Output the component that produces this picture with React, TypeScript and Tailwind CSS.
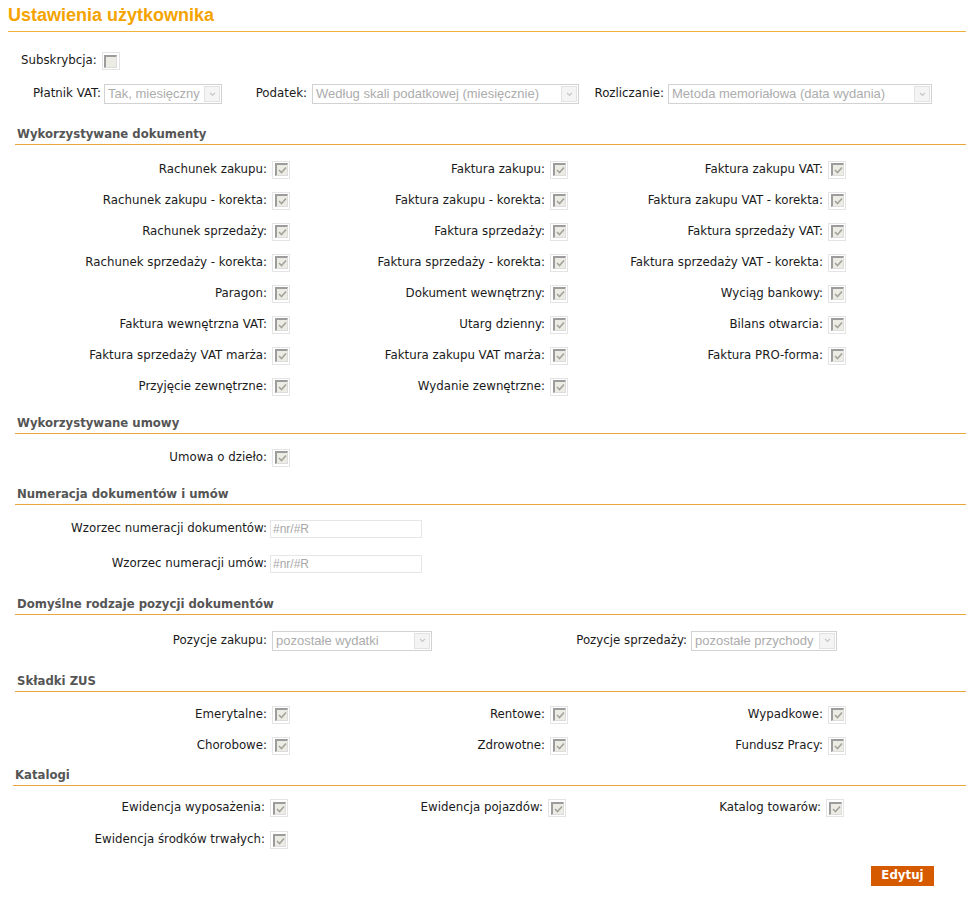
import React from "react";

const font = "font-['Verdana','DejaVu_Sans',sans-serif]";

function Check({ checked = true }: { checked?: boolean }) {
    return (
        <span className="inline-flex w-[18px] h-[18px] items-center justify-center border border-[#e4e4e4] bg-white">
            <span className="relative w-[13px] h-[13px] border-t-[2px] border-l-[2px] border-b border-r border-t-[#9c9c9c] border-l-[#9c9c9c] border-b-[#dcdcdc] border-r-[#dcdcdc] bg-[#ecebe4]">
                {checked && (
                    <svg
                        viewBox="0 0 11 11"
                        className="absolute left-[0px] top-[0px] w-[11px] h-[11px]"
                    >
                        <path
                            d="M2 5 L4.5 7.5 L9 2.5"
                            fill="none"
                            stroke="#a3a39c"
                            strokeWidth="1.6"
                        />
                    </svg>
                )}
            </span>
        </span>
    );
}

function FakeSelect({ value, width }: { value: string; width: string }) {
    return (
        <span
            className={`${width} h-[20px] flex items-center border border-[#d2d2d2] bg-white`}
        >
            <span className="flex-1 pl-[3px] overflow-hidden whitespace-nowrap font-['Liberation_Sans',Arial,sans-serif] text-[13px] leading-[18px] text-[#acacac]">
                {value}
            </span>
            <span className="w-[16px] h-[16px] mr-[1px] flex items-center justify-center border border-[#e2e2e2] bg-[#f4f4f4]">
                <svg viewBox="0 0 8 6" className="w-[7px] h-[5px]">
                    <path
                        d="M1 1 L4 4 L7 1"
                        fill="none"
                        stroke="#c4c4c4"
                        strokeWidth="1.4"
                    />
                </svg>
            </span>
        </span>
    );
}

function SectionHeader({ title, mt, shift = false }: { title: string; mt: string; shift?: boolean }) {
    return (
        <div
            className={`${mt} ${shift ? "ml-[13px] w-[953px]" : "ml-[15px] w-[951px]"} pb-[3px] border-b border-[#e8a63c]`}
        >
            <span className="pl-[2px] block text-[11.7px] leading-[14px] font-bold text-[#555555]">
                {title}
            </span>
        </div>
    );
}

type Item = [string, boolean] | null;

function CheckGrid({ rows, mt, rowH = "h-[31px]", shift = false }: { rows: Item[][]; mt: string; rowH?: string; shift?: boolean }) {
    return (
        <div className={`${mt} ${shift ? "ml-[13px]" : "ml-[15px]"}`}>
            {rows.map((row, i) => (
                <div key={i} className={`grid grid-cols-[252px_26px_252px_26px_252px_26px] items-center ${rowH}`}>
                    {[0, 1, 2].map((c) => {
                        const it = row[c];
                        return (
                            <React.Fragment key={c}>
                                <span className="text-right text-[11.8px] text-[#1a1a1a] whitespace-nowrap">
                                    {it ? it[0] : ""}
                                </span>
                                <span className="pl-[5px] flex items-center">
                                    {it ? <Check checked={it[1]} /> : null}
                                </span>
                            </React.Fragment>
                        );
                    })}
                </div>
            ))}
        </div>
    );
}

const docs: Item[][] = [
    [["Rachunek zakupu:", true], ["Faktura zakupu:", true], ["Faktura zakupu VAT:", true]],
    [["Rachunek zakupu - korekta:", true], ["Faktura zakupu - korekta:", true], ["Faktura zakupu VAT - korekta:", true]],
    [["Rachunek sprzedaży:", true], ["Faktura sprzedaży:", true], ["Faktura sprzedaży VAT:", true]],
    [["Rachunek sprzedaży - korekta:", true], ["Faktura sprzedaży - korekta:", true], ["Faktura sprzedaży VAT - korekta:", true]],
    [["Paragon:", true], ["Dokument wewnętrzny:", true], ["Wyciąg bankowy:", true]],
    [["Faktura wewnętrzna VAT:", true], ["Utarg dzienny:", true], ["Bilans otwarcia:", true]],
    [["Faktura sprzedaży VAT marża:", true], ["Faktura zakupu VAT marża:", true], ["Faktura PRO-forma:", true]],
    [["Przyjęcie zewnętrzne:", true], ["Wydanie zewnętrzne:", true], null],
];

const zus: Item[][] = [
    [["Emerytalne:", true], ["Rentowe:", true], ["Wypadkowe:", true]],
    [["Chorobowe:", true], ["Zdrowotne:", true], ["Fundusz Pracy:", true]],
];

const katalogi: Item[][] = [
    [["Ewidencja wyposażenia:", true], ["Ewidencja pojazdów:", true], ["Katalog towarów:", true]],
    [["Ewidencja środków trwałych:", true], null, null],
];

export default function App() {
    return (
        <div className={`w-[978px] h-[901px] bg-white ${font}`}>
            <div className="ml-[8px] w-[958px] h-[32px] pt-[4px] border-b border-[#f0b23c]">
                <h1 className="font-['Liberation_Sans',Arial,sans-serif] font-bold text-[18px] leading-[22px] text-[#f4a300]">
                    Ustawienia użytkownika
                </h1>
            </div>

            <div className="mt-[20px] h-[18px] flex items-center pl-[21px] gap-[5px]">
                <span className="text-[11.8px] text-[#1a1a1a]">Subskrybcja:</span>
                <Check checked={false} />
            </div>

            <div className="mt-[14px] h-[20px] flex items-center">
                <span className="w-[104px] text-right pr-[3px] text-[11.8px] text-[#1a1a1a]">Płatnik VAT:</span>
                <FakeSelect value="Tak, miesięczny" width="w-[118px]" />
                <span className="w-[90px] text-right pr-[5px] text-[11.8px] text-[#1a1a1a]">Podatek:</span>
                <FakeSelect value="Według skali podatkowej (miesięcznie)" width="w-[267px]" />
                <span className="w-[89px] text-right pr-[4px] text-[11.8px] text-[#1a1a1a]">Rozliczanie:</span>
                <FakeSelect value="Metoda memoriałowa (data wydania)" width="w-[264px]" />
            </div>

            <SectionHeader title="Wykorzystywane dokumenty" mt="mt-[23px]" />
            <CheckGrid rows={docs} mt="mt-[9px]" />

            <SectionHeader title="Wykorzystywane umowy" mt="mt-[14px]" />
            <CheckGrid rows={[[["Umowa o dzieło:", true], null, null]]} mt="mt-[8px]" />

            <SectionHeader title="Numeracja dokumentów i umów" mt="mt-[14px]" />
            <div className="mt-[6px] ml-[15px]">
                {["Wzorzec numeracji dokumentów:", "Wzorzec numeracji umów:"].map((l) => (
                    <div key={l} className="h-[35px] flex items-center">
                        <span className="w-[252px] text-right text-[11.8px] text-[#1a1a1a]">{l}</span>
                        <span className="ml-[3px] w-[152px] h-[18px] flex items-center border border-[#e6e6e6] pl-[2px] font-['Liberation_Sans',Arial,sans-serif] text-[12px] text-[#a8a8a8]">
                            #nr/#R
                        </span>
                    </div>
                ))}
            </div>

            <SectionHeader title="Domyślne rodzaje pozycji dokumentów" mt="mt-[16px]" />
            <div className="mt-[10px] ml-[15px] h-[31px] grid grid-cols-[252px_168px_252px_auto] items-center">
                <span className="text-right text-[11.8px] text-[#1a1a1a]">Pozycje zakupu:</span>
                <span className="pl-[5px]">
                    <FakeSelect value="pozostałe wydatki" width="w-[160px]" />
                </span>
                <span className="text-right text-[11.8px] text-[#1a1a1a]">Pozycje sprzedaży:</span>
                <span className="pl-[4px]">
                    <FakeSelect value="pozostałe przychody" width="w-[146px]" />
                </span>
            </div>

            <SectionHeader title="Składki ZUS" mt="mt-[18px]" />
            <CheckGrid rows={zus} mt="mt-[7px]" />

            <SectionHeader title="Katalogi" mt="mt-[7px]" shift />
            <CheckGrid rows={katalogi} mt="mt-[6px]" rowH="h-[32px]" shift />

            <div className="mt-[10px] flex justify-end pr-[44px]">
                <button className="w-[63px] h-[20px] bg-[#d65a00] text-white text-[11.8px] font-bold">
                    Edytuj
                </button>
            </div>
        </div>
    );
}
